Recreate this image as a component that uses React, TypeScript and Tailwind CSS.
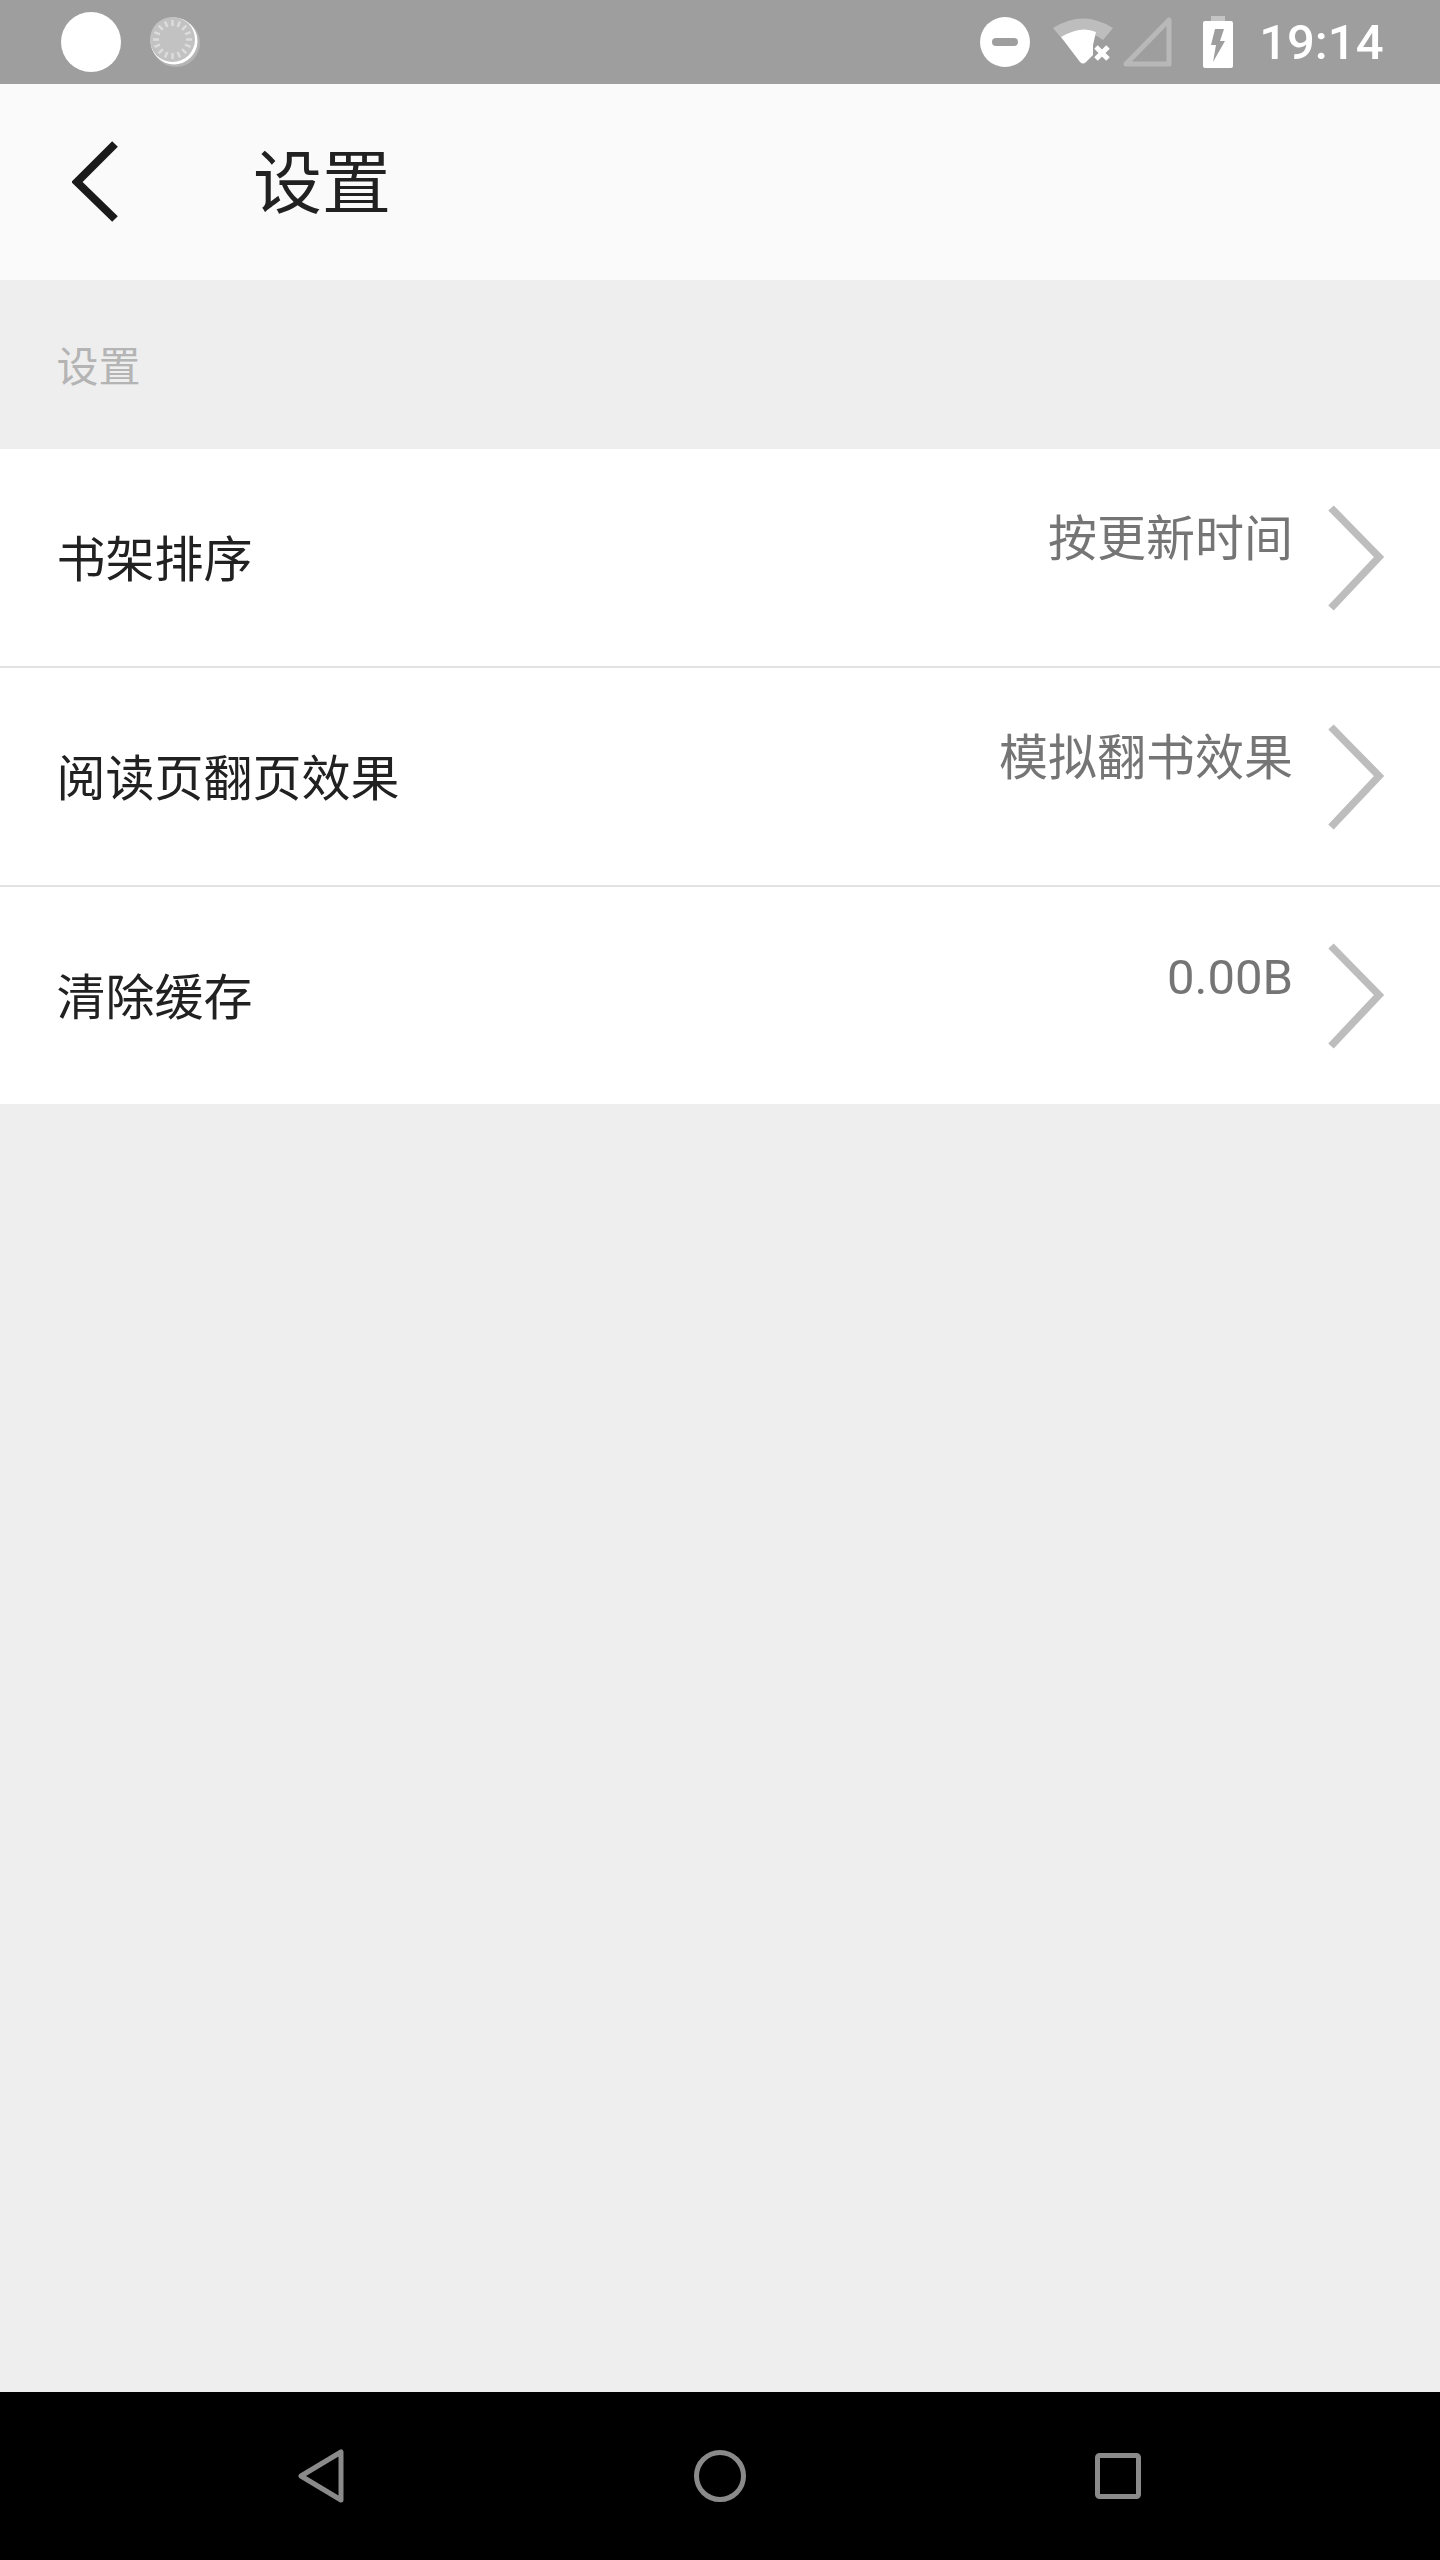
const font = "[font-family:Roboto,'Noto_Sans_CJK_SC','Noto_Sans',sans-serif]";

function Chevron() {
  return (
    <svg width="58" height="108" viewBox="0 0 58 108" className="block ml-[34px] shrink-0">
      <path d="M4 4 L52 53 L4 104" fill="none" stroke="#bdbdbd" strokeWidth="7.5" />
    </svg>
  );
}

function Row({ label, value, border, height }: { label: string; value: string; border?: boolean; height: string }) {
  return (
    <div className={`flex items-center justify-between bg-white pl-[56.5px] pr-[55px] ${height} ${border ? "border-b-2 border-[#e2e2e2]" : ""}`}>
      <span className="text-[49px] leading-[60px] text-[#212121] mt-[7px]">{label}</span>
      <div className="flex items-center">
        <span className="text-[49px] leading-[60px] text-[#757575] mb-[35px]">{value}</span>
        <Chevron />
      </div>
    </div>
  );
}

export default function App() {
  return (
    <div className={`w-[1440px] h-[2560px] flex flex-col bg-[#eeeeee] ${font}`}>
      <div className="h-[84px] bg-[#9e9e9e] flex items-center justify-between pl-[61px] pr-[56.5px] shrink-0">
        <div className="flex items-center">
          <div className="w-[60px] h-[60px] rounded-full bg-white" />
          <svg width="50" height="50" viewBox="0 0 50 50" className="ml-[29px]">
            <circle cx="26" cy="26" r="24" fill="#b4b4b4" />
            <circle cx="24" cy="24" r="23.5" fill="#ffffff" />
            <circle cx="22.5" cy="22.5" r="22.5" fill="#c2c2c2" />
            {Array.from({ length: 16 }).map((_, i) => (
              <line key={i} x1="22.5" y1="3" x2="22.5" y2="9" stroke="#dcdcdc" strokeWidth="2.5" transform={`rotate(${i * 22.5} 22.5 22.5)`} />
            ))}
          </svg>
        </div>
        <div className="flex items-center">
          <svg width="50" height="50" viewBox="0 0 50 50">
            <circle cx="25" cy="25" r="25" fill="#fff" />
            <rect x="12" y="21" width="26" height="8" rx="4" fill="#9e9e9e" />
          </svg>
          <svg width="60" height="50" viewBox="0 0 60 50" className="ml-[23px]">
            <path d="M0 11 Q30 -8 60 11 L50 23 Q30 8 10 23 Z" fill="#bdbdbd" />
            <path d="M8 20 Q28 8 43 15 L40 28 V38 L33 45 Q30 48 27 45 Z" fill="#fff" />
            <path d="M43 30 L55 42 M55 30 L43 42" stroke="#fff" strokeWidth="5" />
          </svg>
          <svg width="50" height="50" viewBox="0 0 50 50" className="ml-[10px]">
            <path d="M46 3 V47 H3 Z" fill="none" stroke="#b8b8b8" strokeWidth="5" strokeLinejoin="round" />
          </svg>
          <svg width="30" height="52" viewBox="0 0 30 52" className="ml-[29.5px]">
            <rect x="8" y="0" width="14" height="6" fill="#c4c4c4" />
            <rect x="0" y="5" width="30" height="47" rx="2" fill="#fff" />
            <path d="M12 13 H21 L17 25 H22 L10 46 L13 29 H8 Z" fill="#9e9e9e" />
          </svg>
          <span className="ml-[26.5px] mt-[2px] text-[49px] leading-[60px] font-medium text-white">19:14</span>
        </div>
      </div>

      <div className="h-[196px] bg-[#fafafa] flex items-center pl-[72px] shrink-0">
        <svg width="48" height="84" viewBox="0 0 48 84" className="shrink-0">
          <path d="M43 4 L5 42 L43 79" fill="none" stroke="#1a1a1a" strokeWidth="8" />
        </svg>
        <span className="ml-[133px] mt-[6px] text-[69px] leading-[80px] text-[#212121]">设置</span>
      </div>

      <div className="h-[169px] flex items-center pl-[56.5px] shrink-0">
        <span className="mt-[6px] text-[42px] leading-[50px] text-[#b4b4b4]">设置</span>
      </div>

      <Row label="书架排序" value="按更新时间" border height="h-[219px]" />
      <Row label="阅读页翻页效果" value="模拟翻书效果" border height="h-[219px]" />
      <Row label="清除缓存" value="0.00B" height="h-[217px]" />

      <div className="flex-1" />

      <div className="h-[168px] bg-black flex items-center justify-center pr-[1px] shrink-0">
        <svg width="46" height="54" viewBox="0 0 46 54" className="shrink-0">
          <path d="M43 3 V51 L3 27 Z" fill="none" stroke="#8a8a8a" strokeWidth="5" strokeLinejoin="round" />
        </svg>
        <svg width="52" height="52" viewBox="0 0 52 52" className="shrink-0 ml-[350px]">
          <circle cx="26" cy="26" r="23.5" fill="none" stroke="#8a8a8a" strokeWidth="5" />
        </svg>
        <svg width="46" height="46" viewBox="0 0 46 46" className="shrink-0 ml-[349px]">
          <rect x="2.5" y="2.5" width="41" height="41" rx="2" fill="none" stroke="#8a8a8a" strokeWidth="5" />
        </svg>
      </div>
    </div>
  );
}
